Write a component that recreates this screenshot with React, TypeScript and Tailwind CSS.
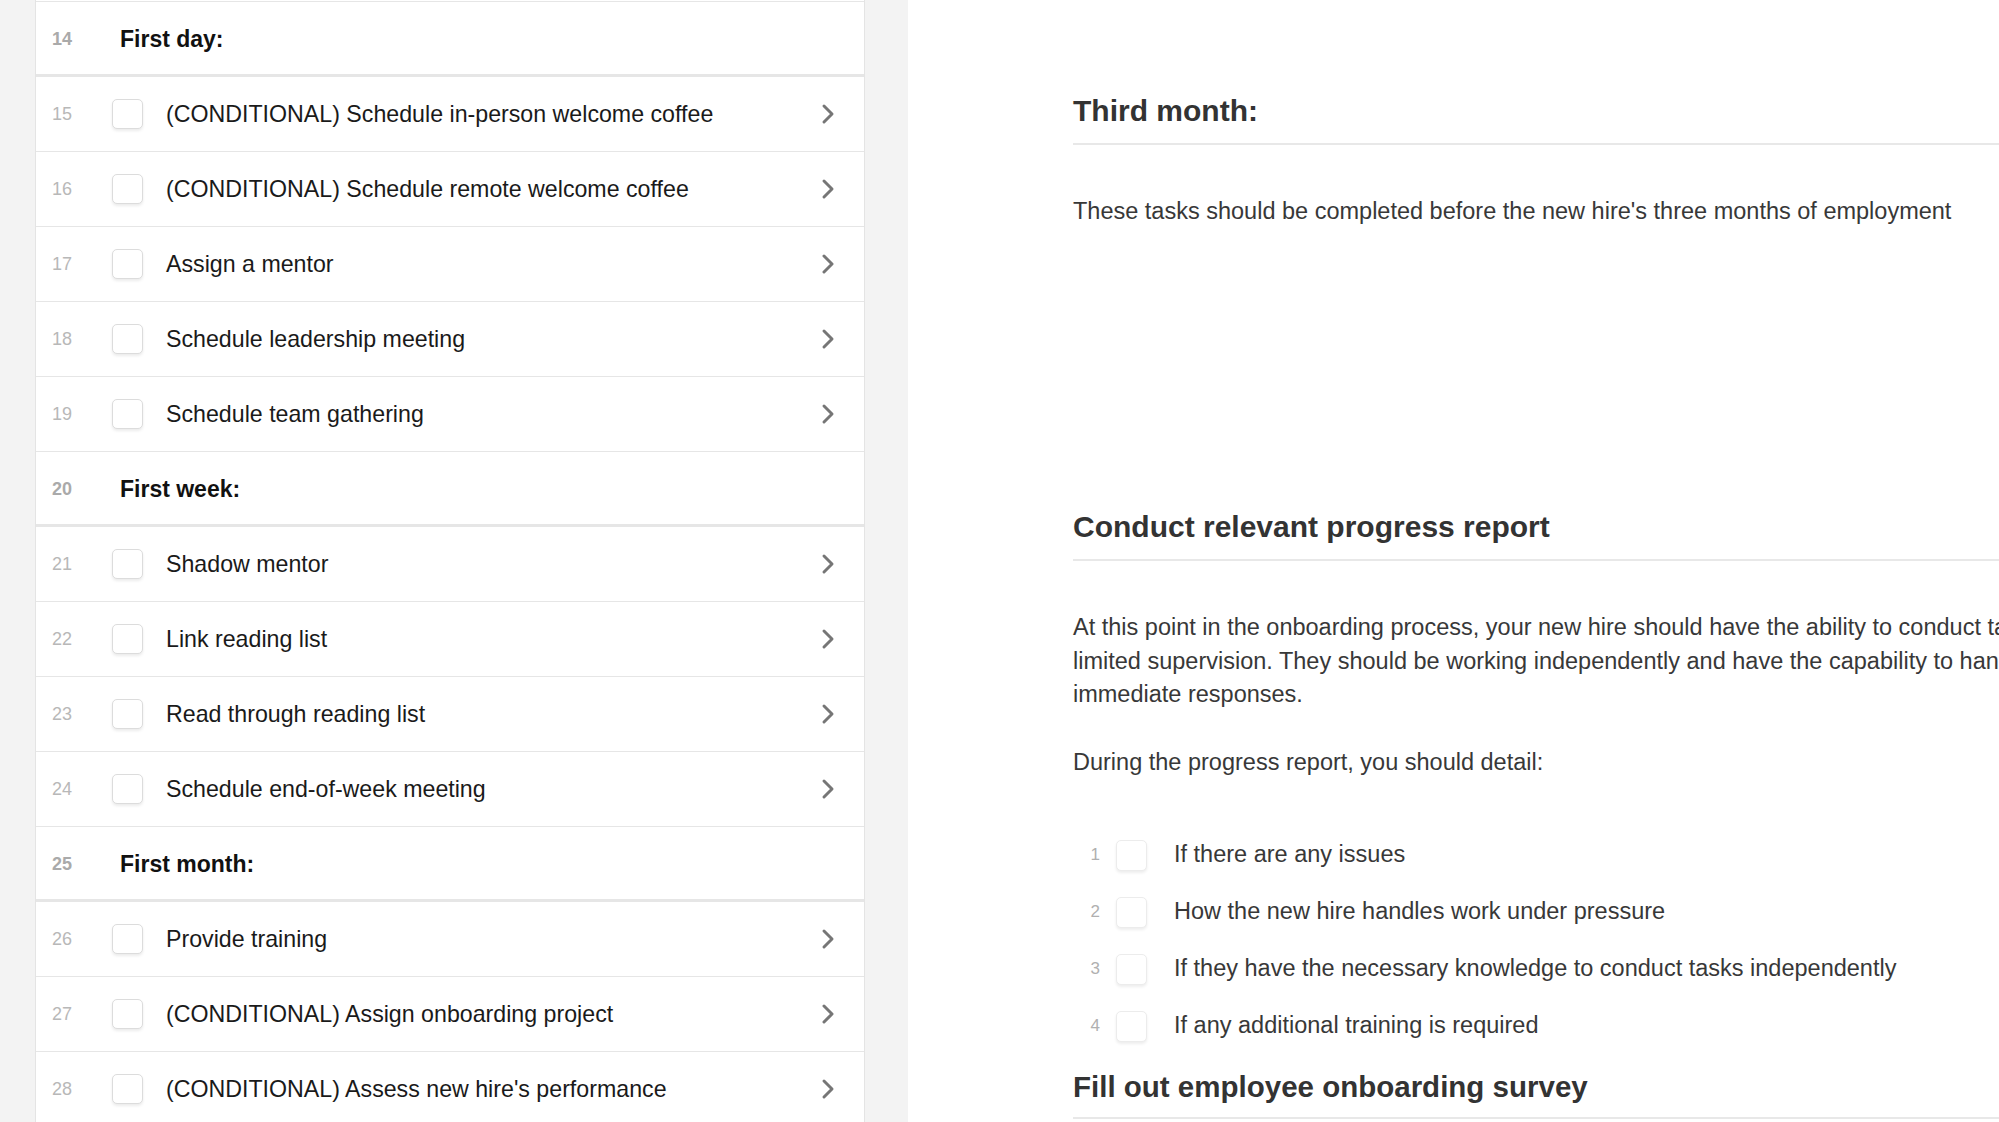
import React from 'react';

type Row =
  | { n: number; kind: 'header'; label: string }
  | { n: number; kind: 'task'; label: string };

const rows: Row[] = [
  { n: 14, kind: 'header', label: 'First day:' },
  { n: 15, kind: 'task', label: '(CONDITIONAL) Schedule in-person welcome coffee' },
  { n: 16, kind: 'task', label: '(CONDITIONAL) Schedule remote welcome coffee' },
  { n: 17, kind: 'task', label: 'Assign a mentor' },
  { n: 18, kind: 'task', label: 'Schedule leadership meeting' },
  { n: 19, kind: 'task', label: 'Schedule team gathering' },
  { n: 20, kind: 'header', label: 'First week:' },
  { n: 21, kind: 'task', label: 'Shadow mentor' },
  { n: 22, kind: 'task', label: 'Link reading list' },
  { n: 23, kind: 'task', label: 'Read through reading list' },
  { n: 24, kind: 'task', label: 'Schedule end-of-week meeting' },
  { n: 25, kind: 'header', label: 'First month:' },
  { n: 26, kind: 'task', label: 'Provide training' },
  { n: 27, kind: 'task', label: '(CONDITIONAL) Assign onboarding project' },
  { n: 28, kind: 'task', label: "(CONDITIONAL) Assess new hire's performance" },
];

const details = [
  'If there are any issues',
  'How the new hire handles work under pressure',
  'If they have the necessary knowledge to conduct tasks independently',
  'If any additional training is required',
];

const Chevron = () => (
  <svg width="14" height="22" viewBox="0 0 14 22" fill="none">
    <polyline
      points="3,3 11,11 3,19"
      stroke="#767676"
      strokeWidth="3"
      strokeLinecap="round"
      strokeLinejoin="round"
    />
  </svg>
);

const TaskRow = ({ row }: { row: Row }) => {
  if (row.kind === 'header') {
    return (
      <div className="flex h-[75px] items-center border-b-[3px] border-[#e6e6e6] pt-[3px]">
        <span className="w-[84px] pl-[16px] text-[18px] font-bold text-[#aaaaaa]">{row.n}</span>
        <span className="text-[23px] font-bold text-[#111111]">{row.label}</span>
      </div>
    );
  }
  return (
    <div className="flex h-[75px] items-center border-b border-[#e6e6e6] pr-[29px]">
      <span className="w-[76px] pl-[16px] text-[18px] text-[#b8b8b8]">{row.n}</span>
      <span className="h-[30px] w-[31px] shrink-0 rounded-[5px] border border-[#dcdcdc] bg-white shadow-[0_2px_3px_rgba(0,0,0,0.08)]" />
      <span className="ml-[23px] flex-1 text-[23.2px] text-[#1a1a1a]">{row.label}</span>
      <Chevron />
    </div>
  );
};

export default function App() {
  return (
    <div
      className="flex h-[1122px] w-[1999px] overflow-hidden bg-white"
      style={{ fontFamily: '"Liberation Sans", Arial, sans-serif' }}
    >
      {/* left gutter */}
      <div className="w-[35px] shrink-0 bg-[#f3f3f3]" />

      {/* checklist panel */}
      <div className="w-[830px] shrink-0 border-x border-[#e4e4e4] bg-white pt-px">
        <div className="border-t border-[#e6e6e6]">
          {rows.map((row) => (
            <TaskRow key={row.n} row={row} />
          ))}
        </div>
      </div>

      {/* divider strip */}
      <div className="w-[43px] shrink-0 bg-[#f3f3f3]" />

      {/* content */}
      <div className="min-w-0 flex-1 overflow-hidden pl-[165px] pt-[91px] text-[#383838]">
        <h2 className="border-b-2 border-[#e8e8e8] pb-[12px] text-[30px] font-bold leading-[40px] text-[#333333]">
          Third month:
        </h2>
        <p className="mt-[49px] whitespace-nowrap text-[23.5px] leading-[34px]">
          These tasks should be completed before the new hire's three months of employment
        </p>

        <h2 className="mt-[279px] border-b-2 border-[#e8e8e8] pb-[12px] text-[30px] font-bold leading-[40px] text-[#333333]">
          Conduct relevant progress report
        </h2>
        <p className="mt-[50px] whitespace-nowrap text-[23.5px] leading-[33.5px]">
          At this point in the onboarding process, your new hire should have the ability to conduct tasks with
          <br />
          limited supervision. They should be working independently and have the capability to handle situations that require
          <br />
          immediate responses.
        </p>
        <p className="mt-[33px] whitespace-nowrap text-[23.5px] leading-[34px]">
          During the progress report, you should detail:
        </p>

        <ul className="mt-[48px]">
          {details.map((d, i) => (
            <li key={d} className="flex h-[57px] items-center">
              <span className="w-[28px] pr-[1px] text-right text-[17px] text-[#b0b0b0]">{i + 1}</span>
              <span className="ml-[15px] h-[31px] w-[31px] shrink-0 rounded-[5px] border border-[#ececec] bg-white shadow-[0_2px_3px_rgba(0,0,0,0.07)]" />
              <span className="ml-[27px] whitespace-nowrap text-[23.5px]">{d}</span>
            </li>
          ))}
        </ul>

        <h2 className="mt-[12px] border-b-2 border-[#e8e8e8] pb-[10px] text-[29.5px] font-bold leading-[40px] text-[#333333]">
          Fill out employee onboarding survey
        </h2>
      </div>
    </div>
  );
}
